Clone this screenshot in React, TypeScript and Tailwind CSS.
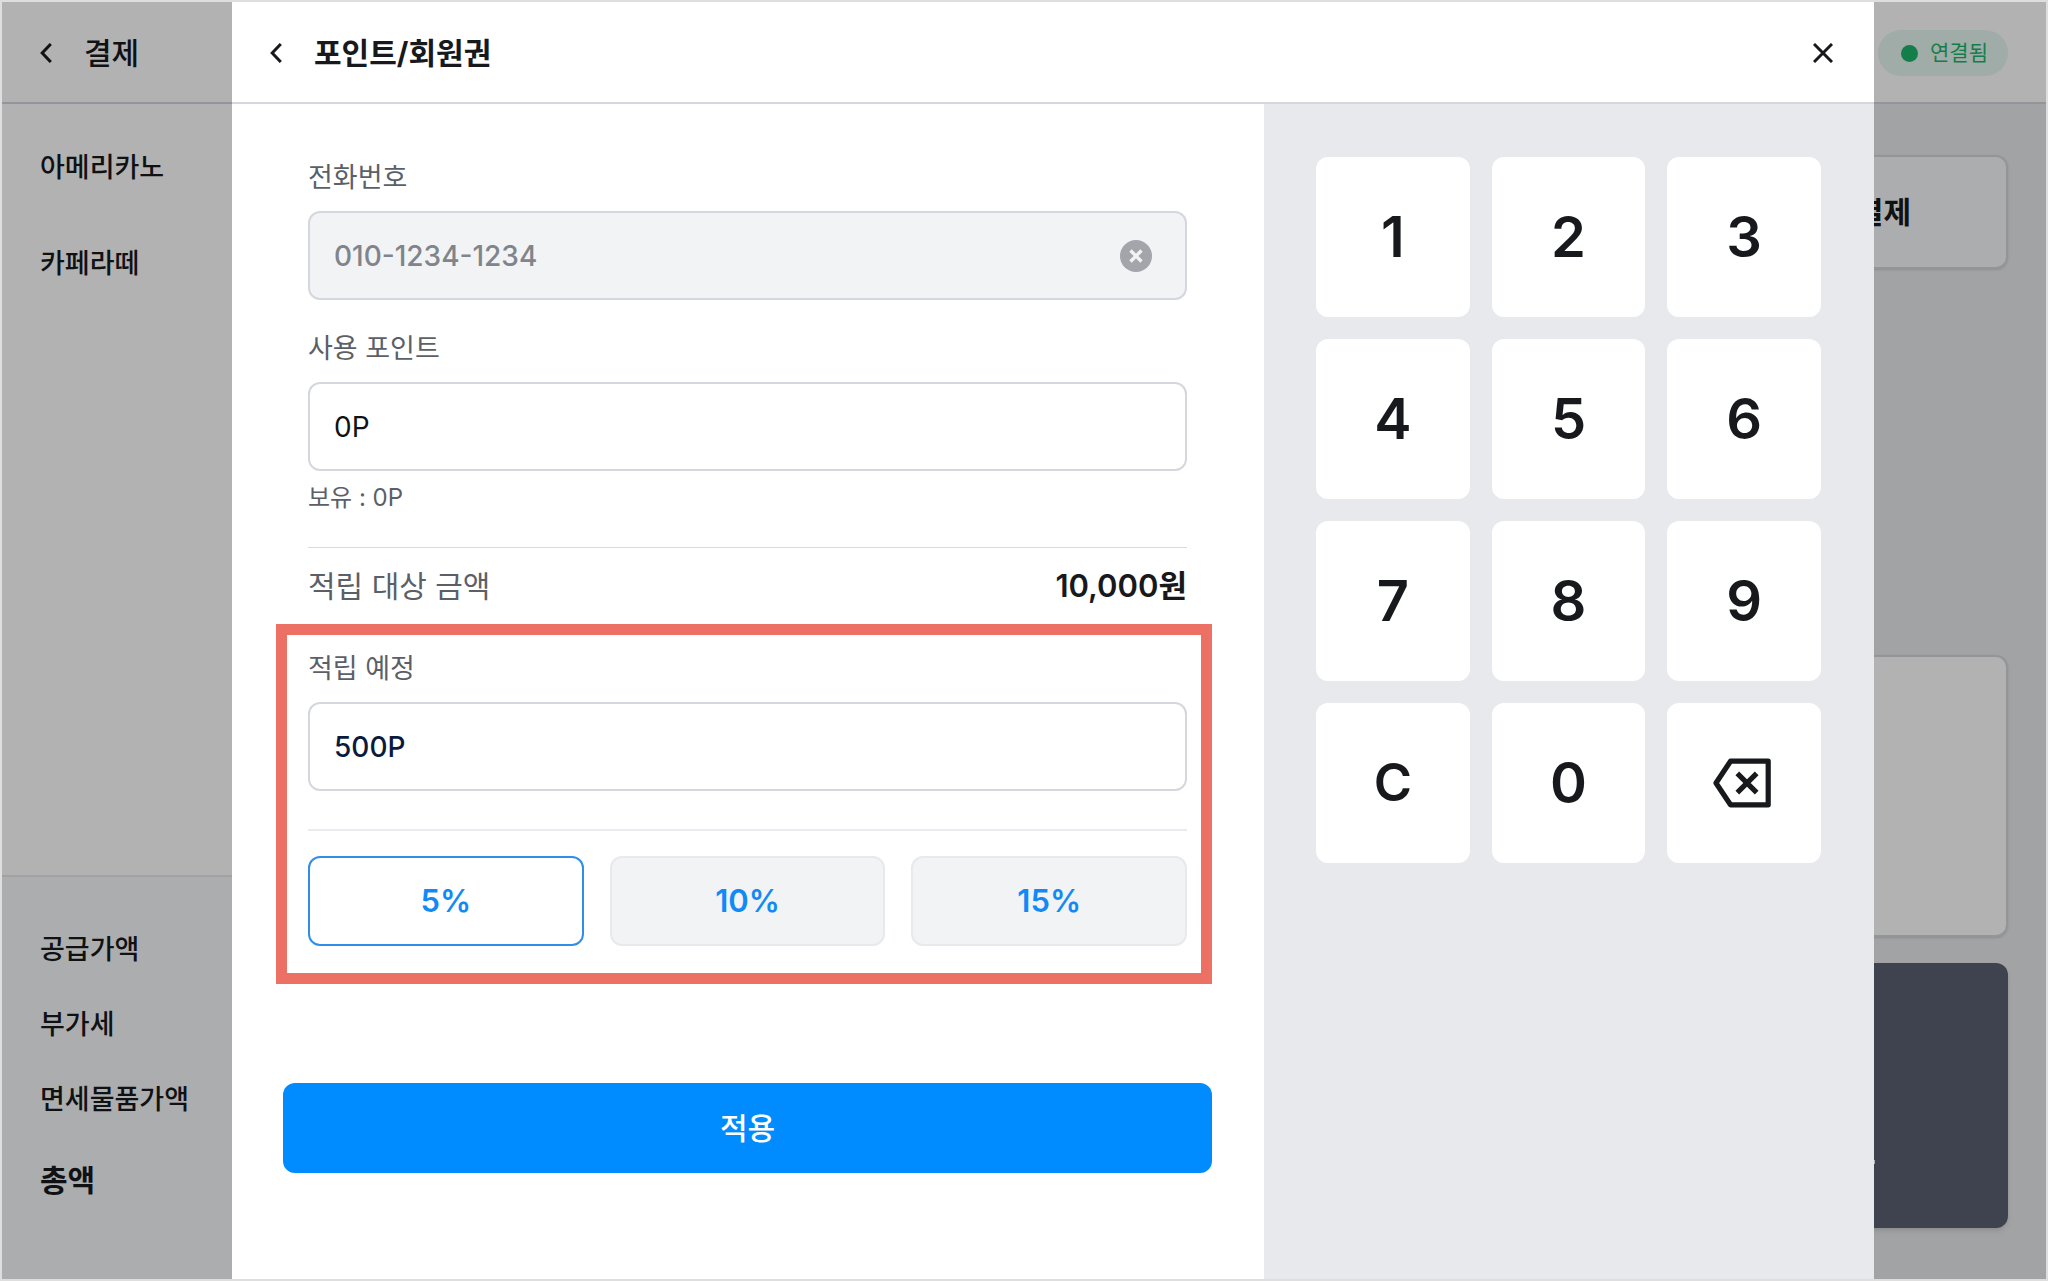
import { useState } from 'react';
import clsx from 'clsx';

const orderItems = ['아메리카노', '카페라떼'];
const summaryItems = ['공급가액', '부가세', '면세물품가액'];
const rates = [5, 10, 15];
const keys = ['1', '2', '3', '4', '5', '6', '7', '8', '9', 'C', '0'];

function BackIcon() {
  return (
    <svg width="12" height="20" viewBox="0 0 12 20" fill="none" stroke="currentColor" strokeWidth="3">
      <path d="M10.8 1 2.2 10l8.6 9" />
    </svg>
  );
}

function CloseIcon() {
  return (
    <svg width="20" height="20" viewBox="0 0 20 20" fill="none" stroke="currentColor" strokeWidth="3">
      <path d="m1 1 18 18M19 1 1 19" />
    </svg>
  );
}

function ClearIcon() {
  return (
    <svg width="32" height="32" viewBox="0 0 32 32" fill="none">
      <circle cx="16" cy="16" r="16" fill="#a3a5ab" />
      <path d="m10.5 10.5 11 11M21.5 10.5l-11 11" stroke="#f2f3f5" strokeWidth="3.4" />
    </svg>
  );
}

function BackspaceIcon() {
  return (
    <svg width="58" height="50" viewBox="0 0 58 50" fill="none" stroke="currentColor" strokeWidth="5.2" strokeLinejoin="round">
      <path d="M17.5 3.2h37.7v43.6H17.5L3 25z" />
      <path d="m24.3 15.3 19.4 19.4M43.7 15.3 24.3 34.7" />
    </svg>
  );
}

interface FieldProps {
  id: string;
  label: string;
  value: string;
  disabled?: boolean;
  className?: string;
};

function Field({ id, label, value, disabled, className }: FieldProps) {
  return (
    <div className={clsx('flex flex-col gap-[13px]', className)}>
      <label htmlFor={id} className="text-[27px] leading-10 text-[#5b5f68]">{ label }</label>
      <div className={clsx('flex h-[89px] items-center rounded-xl border-2 border-[#d5d7de] pl-6 pr-[33px]', disabled ? 'bg-[#f2f3f5]' : 'bg-white')}>
        <input
          id={id}
          defaultValue={value}
          disabled={disabled}
          className={clsx('min-w-0 flex-1 bg-transparent text-[28px] outline-none', disabled ? 'font-medium text-[#80848b]' : id === 'earn' ? 'font-medium text-[#0a1a3c]' : 'text-[#101214]')}
        />
        { disabled && <button type="button" aria-label="지우기"><ClearIcon /></button> }
      </div>
    </div>
  );
}

function PaymentPage() {
  return (
    <div className="flex h-full flex-col bg-white text-[#17191c]">
      <header className="flex h-[102px] shrink-0 items-center justify-between border-b-2 border-[#d5d5de] px-[38px] pt-0.5">
        <div className="flex items-center gap-8">
          <button type="button" aria-label="뒤로"><BackIcon /></button>
          <h1 className="text-[30px] font-medium leading-10">결제</h1>
        </div>
        <div className="flex h-[46px] items-center gap-3 rounded-full bg-[#e6f6f0] pl-[23px] pr-5">
          <span className="size-[17px] rounded-full bg-[#1eb56b]" />
          <span className="text-[21px] text-[#1eb56b]">연결됨</span>
        </div>
      </header>

      <div className="flex min-h-0 flex-1">
        <aside className="flex w-[460px] shrink-0 flex-col justify-between text-[27px] font-medium leading-10">
          <ul className="flex flex-col gap-[56px] px-[38px] pt-11">
            { orderItems.map(item => <li key={item}>{ item }</li>) }
          </ul>
          <div className="border-t-2 border-[#e8e9ed] bg-[#f7f8fb] px-[38px] pb-[79px] pt-[53px]">
            <ul className="flex flex-col gap-[35px]">
              { summaryItems.map(item => <li key={item}>{ item }</li>) }
            </ul>
            <p className="mt-10 text-[30px] font-bold">총액</p>
          </div>
        </aside>

        <main className="flex flex-1 flex-col bg-[#e9eaed] py-[51px] pl-10 pr-[38px]">
          <button type="button" className="flex h-[114px] items-center justify-end rounded-xl border-2 border-[#d5d6da] bg-[#f7f8fb] pr-[95px] text-[30px] font-bold shadow-sm">결제</button>
          <div className="mt-auto h-[282px] rounded-xl border-2 border-[#d5d6da] bg-white shadow-sm" />
          <div className="mt-[26px] flex h-[265px] flex-col items-end justify-end rounded-xl bg-[#5b6171] pb-16 pr-[133px] shadow-md">
            <span className="h-1 w-6 bg-white" />
          </div>
        </main>
      </div>
    </div>
  );
}

function Keypad() {
  return (
    <div className="w-[610px] shrink-0 bg-[#e8e9ed] pl-[52px] pr-[53px] pt-[53px] text-[#17191c]">
      <div className="grid auto-rows-[160px] grid-cols-3 gap-[22px]">
        { keys.map(key => (
          <button key={key} type="button" className={clsx('rounded-xl bg-white font-semibold', key === 'C' ? 'text-[52px]' : 'text-[56px]')}>{ key }</button>
        )) }
        <button type="button" aria-label="삭제" className="flex items-center justify-center rounded-xl bg-white pr-1"><BackspaceIcon /></button>
      </div>
    </div>
  );
}

function PointForm() {
  const [rate, setRate] = useState(5);

  return (
    <form className="relative flex-1 bg-white pl-[51px] pr-[52px] pt-[54px]">
      <div className="px-[25px]">
        <Field id="phone" label="전화번호" value="010-1234-1234" disabled />
        <Field id="use" label="사용 포인트" value="0P" className="mt-[29px]" />
        <p className="mt-[9px] text-2xl leading-9 text-[#5b5f68]">보유 : 0P</p>

        <div className="mt-[31px] flex items-center justify-between border-t border-[#d9dade] pt-[18px] leading-10">
          <span className="text-[30px] text-[#5b5f68]">적립 대상 금액</span>
          <span className="text-[31px] font-semibold text-[#17191c]">10,000원</span>
        </div>

        <Field id="earn" label="적립 예정" value="500P" className="mt-[43px]" />

        <div className="mt-[38px] grid grid-cols-3 gap-[26px] border-t-2 border-[#eaebee] pt-[25px]">
          { rates.map(value => (
            <button
              key={value}
              type="button"
              onClick={() => setRate(value)}
              className={clsx('h-[90px] rounded-xl border-2 text-[31px] font-semibold text-[#128af5]', rate === value ? 'border-[#2f8fe8] bg-white' : 'border-[#e8e9ed] bg-[#f2f3f5]')}
            >
              { value }%
            </button>
          )) }
        </div>
      </div>

      <button type="button" className="mt-[137px] h-[90px] w-full rounded-xl bg-[#008cff] text-[30px] font-medium text-white">적용</button>

      {/* highlight around the earning section */}
      <div className="pointer-events-none absolute left-11 right-[52px] top-[520px] h-[360px] border-[11px] border-[#ec7063]" />
    </form>
  );
}

export default function App() {
  return (
    <div className="relative h-screen overflow-hidden border-2 border-[#dedede] font-['Inter','Noto_Sans_CJK_KR',sans-serif]">
      <PaymentPage />

      <div className="absolute inset-0 bg-black/30 pl-[230px] pr-[172px]">
        <div role="dialog" aria-label="포인트/회원권" className="flex h-full flex-col bg-white">
          <header className="flex h-[102px] shrink-0 items-center justify-between border-b-2 border-[#d5d6de] pl-[38px] pr-[41px] pt-0.5 text-[#17191c]">
            <div className="flex items-center gap-8">
              <button type="button" aria-label="뒤로"><BackIcon /></button>
              <h2 className="text-[30px] font-bold leading-10">포인트/회원권</h2>
            </div>
            <button type="button" aria-label="닫기"><CloseIcon /></button>
          </header>

          <div className="flex min-h-0 flex-1">
            <PointForm />
            <Keypad />
          </div>
        </div>
      </div>
    </div>
  );
}
